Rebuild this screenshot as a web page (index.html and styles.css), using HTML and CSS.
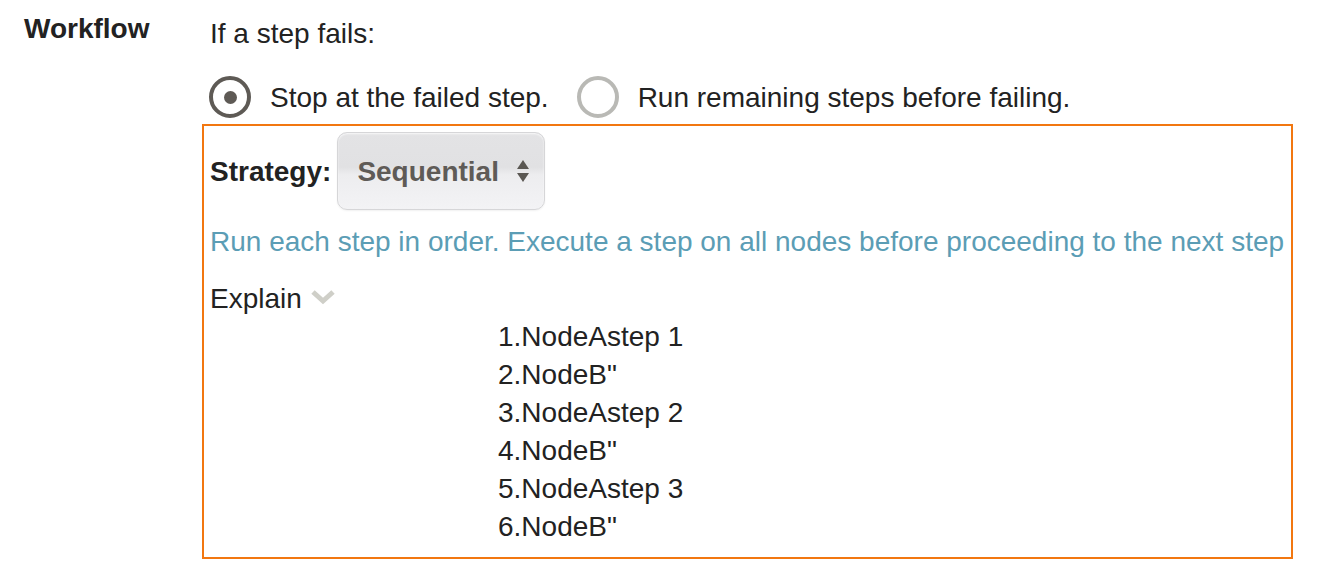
FILE: index.html
```html
<!DOCTYPE html>
<html lang="en">
<head>
<meta charset="utf-8">
<title>Workflow</title>
<link rel="stylesheet" href="styles.css">
</head>
<body>
<div class="form-row">
  <div class="label">Workflow</div>
  <div class="content">
    <div class="heading">If a step fails:</div>
    <div class="radios">
      <label class="radio-opt">
        <span class="radio checked"><span class="dot"></span></span>
        <span class="radio-text">Stop at the failed step.</span>
      </label>
      <label class="radio-opt">
        <span class="radio"></span>
        <span class="radio-text">Run remaining steps before failing.</span>
      </label>
    </div>
    <div class="panel">
      <div class="strategy">
        <span class="strategy-label">Strategy:</span>
        <div class="select">
          <span class="select-value">Sequential</span>
          <svg class="select-arrows" width="14" height="26" viewBox="0 0 14 26" aria-hidden="true">
            <polygon points="7,2 13,11 1,11" fill="#5b5853"/>
            <polygon points="1,15 13,15 7,24" fill="#5b5853"/>
          </svg>
        </div>
      </div>
      <div class="description">Run each step in order. Execute a step on all nodes before proceeding to the next step</div>
      <div class="explain">Explain
        <svg class="chevron" width="26" height="16" viewBox="0 0 26 16" aria-hidden="true">
          <polyline points="3,3 13,12 23,3" fill="none" stroke="#cfcfc8" stroke-width="5" stroke-linejoin="miter"/>
        </svg>
      </div>
      <ol class="steps">
        <li>1.NodeAstep 1</li>
        <li>2.NodeB"</li>
        <li>3.NodeAstep 2</li>
        <li>4.NodeB"</li>
        <li>5.NodeAstep 3</li>
        <li>6.NodeB"</li>
      </ol>
    </div>
  </div>
</div>
</body>
</html>
```

FILE: styles.css
```css
html, body {
  margin: 0;
  padding: 0;
  background: #ffffff;
}

body {
  font-family: "Liberation Sans", Arial, Helvetica, sans-serif;
  font-size: 28px;
  line-height: 38px;
  color: #222222;
}

.form-row {
  display: flex;
  padding-top: 10px;
}

.label {
  box-sizing: border-box;
  width: 202px;
  padding-left: 24px;
  font-weight: bold;
  flex: none;
}

.content {
  width: 1091px;
  padding-top: 5px;
}

.heading {
  padding-left: 8px;
}

.radios {
  display: flex;
  align-items: center;
  margin-top: 24px;
  padding-left: 7px;
  height: 40px;
  gap: 28px;
}

.radio-opt {
  display: flex;
  align-items: center;
  gap: 19px;
}

.radio-text {
  padding-top: 2px;
}

.radio {
  box-sizing: border-box;
  width: 42px;
  height: 42px;
  border-radius: 50%;
  border: 4px solid #b9b9b5;
  display: flex;
  align-items: center;
  justify-content: center;
  flex: none;
}

.radio.checked {
  border-color: #5e5a55;
}

.radio .dot {
  width: 13px;
  height: 13px;
  border-radius: 50%;
  background: #5e5a55;
}

.panel {
  box-sizing: border-box;
  margin-top: 7px;
  width: 100%;
  border: 2px solid #f27710;
  padding: 6px 6px 11px 6px;
}

.strategy {
  display: flex;
  align-items: center;
  gap: 6px;
}

.strategy-label {
  font-weight: bold;
  padding-top: 2px;
}

.select {
  box-sizing: border-box;
  width: 208px;
  height: 78px;
  border: 1px solid #d6d6d8;
  border-radius: 10px;
  background: linear-gradient(to bottom, #e3e3e5 0%, #e1e1e3 45%, #ededef 55%, #f3f3f5 100%);
  box-shadow: inset 0 1px 2px rgba(255,255,255,0.8), 0 1px 2px rgba(0,0,0,0.06);
  display: flex;
  align-items: center;
  padding-left: 19px;
  padding-right: 14px;
  justify-content: space-between;
}

.select-value {
  font-weight: bold;
  color: #5f5b57;
  padding-top: 2px;
}

.select-arrows {
  display: block;
}

.description {
  margin-top: 13px;
  color: #5b9db5;
}

.explain {
  margin-top: 19px;
  display: flex;
  align-items: center;
  gap: 8px;
}

.chevron {
  display: block;
  margin-top: -4px;
}

.steps {
  list-style: none;
  margin: 0;
  padding: 0 0 0 288px;
}
```
